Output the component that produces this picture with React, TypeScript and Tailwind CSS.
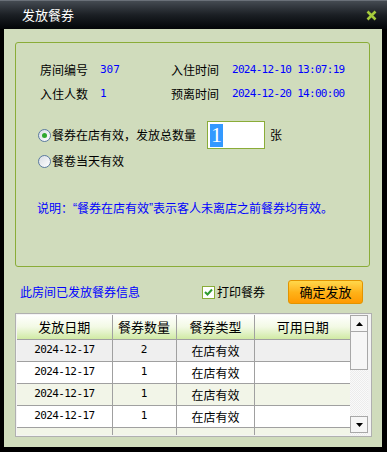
import React from "react";

const cjk = "font-['SimSun','Noto_Sans_CJK_SC',sans-serif]";
const mono = "font-['DejaVu_Sans_Mono','Noto_Sans_CJK_SC',monospace]";
const q = "font-['Liberation_Sans',sans-serif]";

const rows = [
  { date: "2024-12-17", count: "2", type: "在店有效", bg: "bg-[#efefef]" },
  { date: "2024-12-17", count: "1", type: "在店有效", bg: "bg-white" },
  { date: "2024-12-17", count: "1", type: "在店有效", bg: "bg-[#f2f5e8]" },
  { date: "2024-12-17", count: "1", type: "在店有效", bg: "bg-white" },
  { date: "", count: "", type: "", bg: "bg-[#f2f5e8]" },
];

function Radio({ checked }: { checked?: boolean }) {
  return (
    <span className="flex h-[13px] w-[13px] items-center justify-center rounded-full border border-[#5a7aa0] bg-gradient-to-br from-[#d8dde4] to-white">
      {checked && <span className="h-[5px] w-[5px] rounded-full bg-[#2fa82f]" />}
    </span>
  );
}

function Arrow({ up }: { up?: boolean }) {
  return (
    <svg width="7" height="4" viewBox="0 0 7 4">
      <path d={up ? "M0 4 L3.5 0 L7 4 Z" : "M0 0 L3.5 4 L7 0 Z"} fill="#000" />
    </svg>
  );
}

export default function App() {
  return (
    <div className={`flex h-[452px] w-[387px] flex-col bg-black ${cjk} text-[12px] text-black`}>
      {/* title bar */}
      <div className="flex h-[29px] items-center justify-between border-t border-[#6a7078] bg-gradient-to-b from-[#454b52] via-[#1b1f24] to-[#040608] pl-[22px] pr-[10px]">
        <span className="text-[13px] text-white">发放餐券</span>
        <svg width="11" height="11" viewBox="0 0 11 11">
          <path d="M1.5 1.5 L9.5 9.5 M9.5 1.5 L1.5 9.5" stroke="#a6cc3c" strokeWidth="2.6" />
        </svg>
      </div>

      {/* body */}
      <div className="ml-[4px] mr-[5px] flex h-[418px] flex-col bg-[#d0dcbc] px-[11px] pt-[13px]">
        {/* group box */}
        <div className="flex h-[225px] w-[355px] flex-col rounded-[3px] border-[1.5px] border-[#8aac38] pl-[24px] pt-[15px]">
          <div className="flex h-[24px] items-center">
            <span className="w-[60px]">房间编号</span>
            <span className={`w-[71px] text-[#0000ff] ${mono} text-[11px]`}>307</span>
            <span className="w-[61px]">入住时间</span>
            <span className={`text-[#0000ff] ${mono} text-[11px] tracking-[-0.7px]`}>2024-12-10 13:07:19</span>
          </div>
          <div className="flex h-[24px] items-center">
            <span className="w-[60px]">入住人数</span>
            <span className={`w-[71px] text-[#0000ff] ${mono} text-[11px]`}>1</span>
            <span className="w-[61px]">预离时间</span>
            <span className={`text-[#0000ff] ${mono} text-[11px] tracking-[-0.7px]`}>2024-12-20 14:00:00</span>
          </div>

          <div className="mt-[15px] flex h-[28px] items-center">
            <div className="ml-[-2px] flex items-center gap-[1px]">
              <Radio checked />
              <span>餐券在店有效，发放总数量</span>
            </div>
            <div className="ml-[11px] flex h-[28px] w-[58px] items-center border border-[#8aac38] bg-white pl-[2px]">
              <span className="flex h-[23px] w-[13px] items-center justify-center bg-[#3399ff] font-['Liberation_Serif',serif] text-[22px] leading-none text-white">
                1
              </span>
            </div>
            <span className="ml-[5px]">张</span>
          </div>

          <div className="ml-[-2px] mt-[2px] flex h-[20px] items-center gap-[1px]">
            <Radio />
            <span>餐卷当天有效</span>
          </div>

          <div className="ml-[-3px] mt-[27px] flex h-[20px] items-center text-[#0000ff]">
            说明：<span className={q}>“</span>餐券在店有效<span className={q}>”</span>表示客人未离店之前餐券均有效。
          </div>
        </div>

        {/* info row */}
        <div className="mt-[13px] flex h-[24px] items-center">
          <span className="ml-[5px] w-[182px] text-[#0000ff]">此房间已发放餐券信息</span>
          <span className="flex h-[13px] w-[13px] items-center justify-center border border-[#8aac38] bg-white">
            <svg width="9" height="8" viewBox="0 0 9 8">
              <path d="M1 4 L3.5 6.5 L8 1.5" stroke="#2f9a2f" strokeWidth="2" fill="none" />
            </svg>
          </span>
          <span className="ml-[2px]">打印餐券</span>
          <button className="ml-[23px] flex h-[24px] w-[75px] items-center justify-center rounded-[3px] border border-[#e29400] bg-gradient-to-b from-[#ffd84a] via-[#ffb318] to-[#ff9a00] text-[13px] text-black">
            确定发放
          </button>
        </div>

        {/* table */}
        <div className="mt-[9px] flex h-[124px] w-[357px] border border-[#b0b0b0] bg-[#f4f4f4] p-px pr-[3px]">
          <div className="flex h-[120px] w-[334px] flex-col overflow-hidden bg-white">
            <div className="flex h-[25px] shrink-0 border-b border-[#a0a0a0] bg-gradient-to-b from-white via-[#f2f9e4] to-[#d0eaa4] text-[13px]">
              <div className="flex w-[96px] items-center justify-center border-r border-[#a0a0a0]">发放日期</div>
              <div className="flex w-[64px] items-center justify-center border-r border-[#a0a0a0]">餐券数量</div>
              <div className="flex w-[79px] items-center justify-center border-r border-[#a0a0a0]">餐券类型</div>
              <div className="flex w-[95px] items-center justify-center">可用日期</div>
            </div>
            {rows.map((r, i) => (
              <div key={i} className={`flex h-[22px] shrink-0 border-b border-[#a0a0a0] ${r.bg}`}>
                <div className={`flex w-[96px] items-center justify-center border-r border-[#a0a0a0] ${mono} text-[11px] tracking-[-0.6px]`}>{r.date}</div>
                <div className={`flex w-[64px] items-center justify-center border-r border-[#a0a0a0] ${mono} text-[11px]`}>{r.count}</div>
                <div className="flex w-[79px] items-center justify-center border-r border-[#a0a0a0]">{r.type}</div>
                <div className="w-[95px]" />
              </div>
            ))}
          </div>
          {/* scrollbar */}
          <div className="flex h-[120px] w-[18px] flex-col bg-[repeating-conic-gradient(#ececec_0%_25%,#fafafa_0%_50%)] bg-[length:2px_2px]">
            <div className="flex h-[17px] items-center justify-center border border-[#a8a8a8] bg-[#f6f6f6]">
              <Arrow up />
            </div>
            <div className="h-[38px] border border-t-0 border-[#a8a8a8] bg-[#f6f6f6]" />
            <div className="flex-1" />
            <div className="mb-[2px] flex h-[17px] items-center justify-center border border-[#a8a8a8] bg-[#f6f6f6]">
              <Arrow />
            </div>
          </div>
        </div>
      </div>
    </div>
  );
}
